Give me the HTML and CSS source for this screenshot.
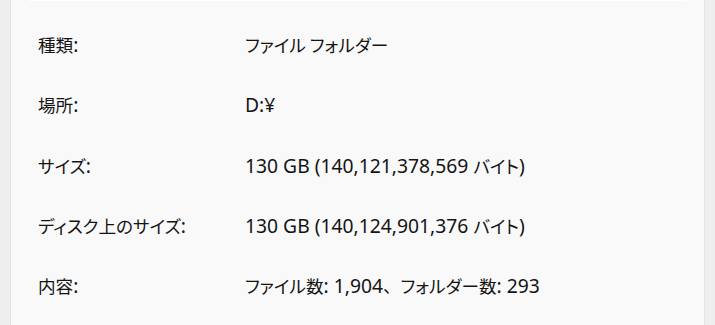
FILE: index.html
```
<!DOCTYPE html>
<html lang="ja">
<head>
<meta charset="utf-8">
<link rel="stylesheet" href="styles.css">
</head>
<body>
<div class="page">
  <div class="card">
    <div class="topline"></div>
    <div class="rows">
      <div class="row"><span class="label"><span class="ja">種類</span>:</span><span class="value"><span class="ja">ファイル フォルダー</span></span></div>
      <div class="row"><span class="label"><span class="ja">場所</span>:</span><span class="value">D:¥</span></div>
      <div class="row"><span class="label"><span class="ja">サイズ</span>:</span><span class="value">130 GB (140,121,378,569 <span class="ja">バイト</span>)</span></div>
      <div class="row"><span class="label"><span class="ja">ディスク上のサイズ</span>:</span><span class="value">130 GB (140,124,901,376 <span class="ja">バイト</span>)</span></div>
      <div class="row"><span class="label"><span class="ja">内容</span>:</span><span class="value"><span class="ja">ファイル数</span>: 1,904<span class="ja full">、</span><span class="ja">フォルダー数</span>: 293</span></div>
    </div>
  </div>
</div>
</body>
</html>
```
FILE: styles.css
```
html, body {
  margin: 0;
  padding: 0;
  background: #eeeeee;
}
.page {
  width: 715px;
  height: 325px;
  padding: 0 10px 0 10px;
  box-sizing: border-box;
  overflow: hidden;
}
.card {
  height: 325px;
  background: #f9f9f9;
  border-left: 1px solid #e3e3e3;
  border-right: 1px solid #e3e3e3;
  box-sizing: border-box;
  padding: 0 18px;
}
.topline {
  height: 1px;
  background: #ffffff;
}
.rows {
  display: flex;
  flex-direction: column;
  padding-left: 9px;
  padding-top: 30px;
}
.row {
  display: flex;
  height: 60.3px;
  align-items: flex-start;
  font-family: "Noto Sans", "Noto Sans CJK JP", sans-serif;
  font-feature-settings: "palt" 1;
  font-size: 19.3px;
  line-height: 28px;
  color: #141414;
}
.ja {
  font-family: "Noto Sans CJK JP", sans-serif;
  font-size: 17.6px;
}
.full {
  font-feature-settings: normal;
}
.label {
  width: 207px;
  flex: none;
}
.value {
  flex: none;
}
```
